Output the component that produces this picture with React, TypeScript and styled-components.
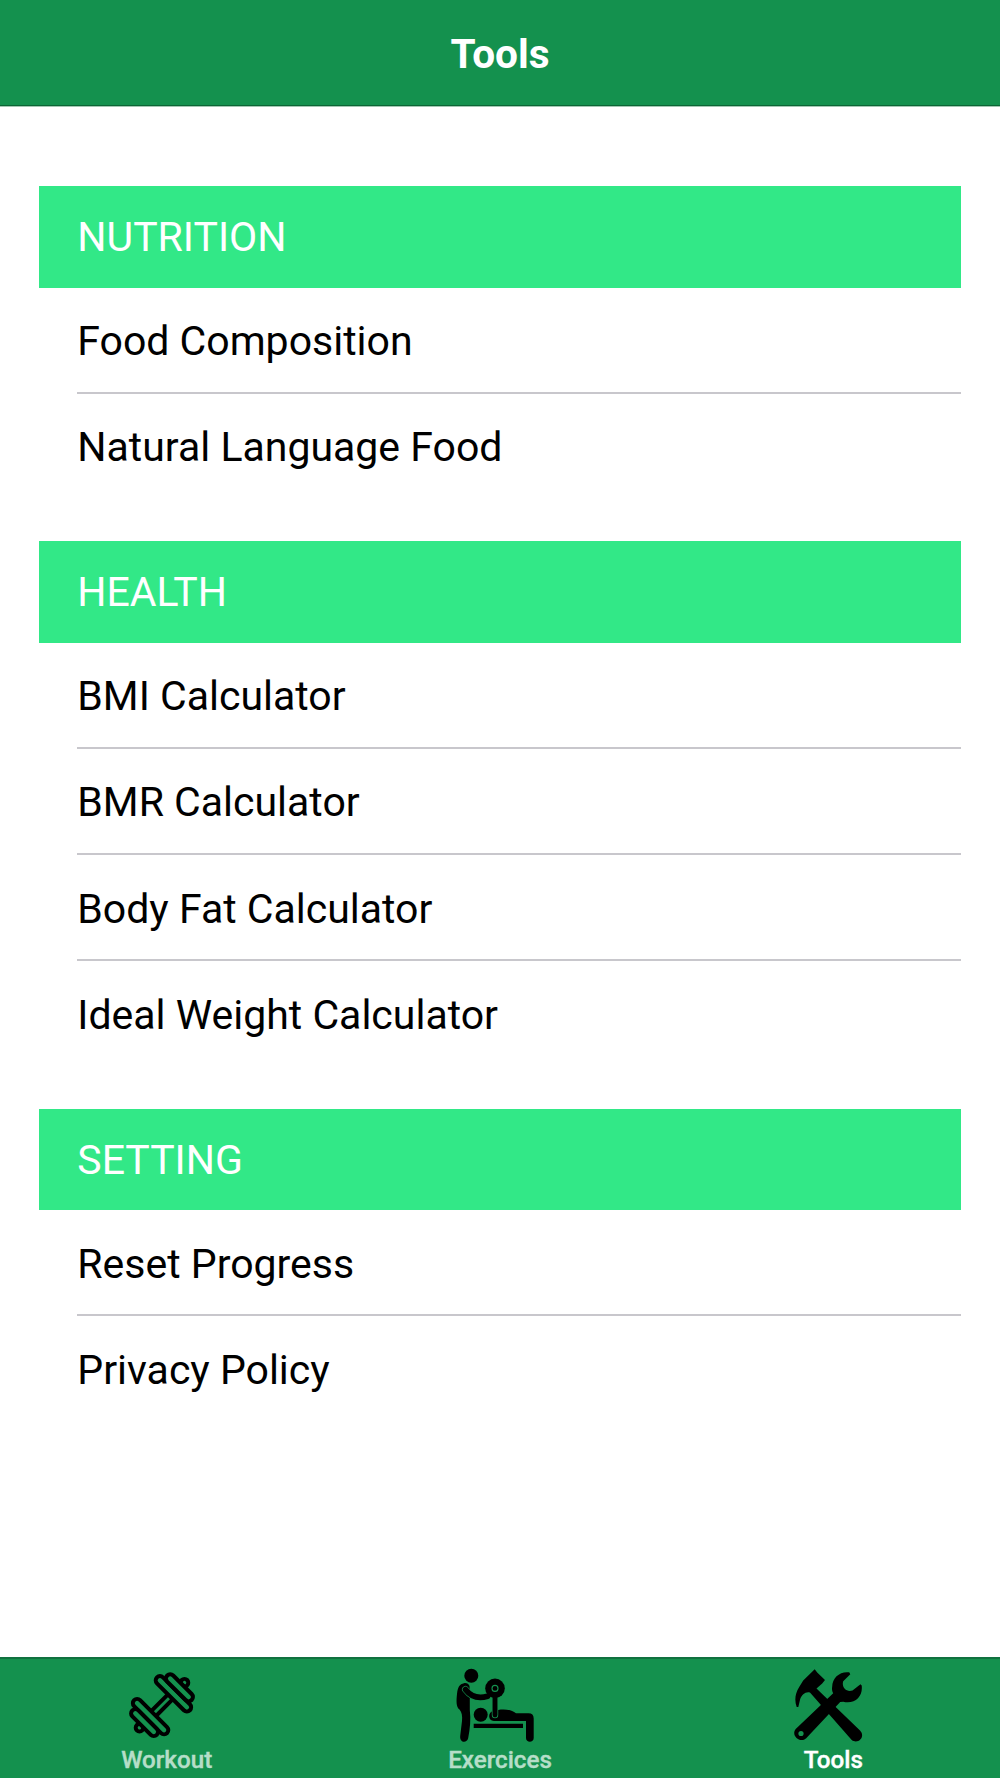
import React from "react";
import styled, { createGlobalStyle } from "styled-components";

const green = "#14914e";

const Global = createGlobalStyle`
  * { box-sizing: border-box; }
  body { margin: 0; background: #fff; font-family: Roboto, sans-serif; }
`;
const Screen = styled.div`
  width: 1000px;
  height: 1778px;
  display: flex;
  flex-direction: column;
  overflow: hidden;
`;
const Header = styled.header`
  height: 107px;
  flex: none;
  background: ${green};
  border-bottom: 1px solid #a3c9b3;
  box-shadow: inset 0 -1px 0 #0c6535;
  display: flex;
  align-items: center;
  justify-content: center;
  padding-top: 2px;
`;
const Title = styled.h1`
  margin: 0;
  font-size: 40.6px;
  line-height: 48px;
  font-weight: 700;
  color: #fff;
`;
const Content = styled.main`
  flex: 1;
  padding: 79px 39px 0;
  display: flex;
  flex-direction: column;
  gap: 41px;
`;
const Section = styled.section`
  display: flex;
  flex-direction: column;
`;
const Heading = styled.h2`
  margin: 0;
  height: 101.5px;
  padding: 1px 0 0 38.3px;
  display: flex;
  align-items: center;
  background: #32e887;
  color: #fff;
  font-size: 41px;
  font-weight: 400;
`;
const List = styled.ul`
  margin: 0;
  padding: 0 0 0 38.3px;
  list-style: none;
`;
const Row = styled.li`
  height: 106.25px;
  padding-top: 3px;
  display: flex;
  align-items: center;
  font-size: 41px;
  color: #000;
  border-bottom: 2px solid #c8c7cc;
  &:last-child { border-color: transparent; }
`;
const TabBar = styled.nav`
  height: 121px;
  flex: none;
  display: grid;
  grid-template-columns: repeat(3, 1fr);
  background: ${green};
  border-top: 2px solid #10713f;
`;
const Tab = styled.div<{ $active?: boolean }>`
  display: flex;
  flex-direction: column;
  align-items: center;
  padding-top: 1px;
  font-size: 24.2px;
  font-weight: 500;
  line-height: 28px;
  -webkit-text-stroke: 0.4px currentColor;
  color: ${p => (p.$active ? "#fff" : "#b6dec8")};
`;
const Icon = styled.svg`
  display: block;
  flex: none;
  height: 84px;
  margin: 0 8px 2px 0;
`;

function DumbbellIcon() {
  return (
    <Icon width="74" height="84" viewBox="125.7 1660 74 84" fill="none" stroke="#000" strokeWidth="4">
      <g transform="translate(161.7 1705.2) rotate(-45)">
        <path d="M-14 -3.4H14M-14 3.4H14" />
        <circle cx="-31.8" cy="0" r="3.8" />
        <circle cx="31.8" cy="0" r="3.8" />
        <rect x="-20.4" y="-23.3" width="8.5" height="46.6" rx="4.25" fill={green} />
        <rect x="-28.9" y="-17.3" width="8.5" height="34.6" rx="4.25" fill={green} />
        <rect x="11.9" y="-23.3" width="8.5" height="46.6" rx="4.25" fill={green} />
        <rect x="20.4" y="-17.3" width="8.5" height="34.6" rx="4.25" fill={green} />
      </g>
    </Icon>
  );
}

function BenchPressIcon() {
  return (
    <Icon width="84" height="84" viewBox="454 1660 84 84">
      <circle cx="471.3" cy="1675.8" r="7" />
      <path d="M464 1683.2C459.5 1684 457.8 1687 457 1694C456.3 1701 456 1707 459.5 1709.5C461.8 1712 462.5 1716 462 1721L460.2 1736C459.5 1743 467 1743.500 468.2 1738C470 1729 471 1719 469.8 1710V1692L469.5 1686C468.5 1684 467 1682.8 464 1683.2Z" />
      <path d="M465.5 1689.5C471.5 1697.5 479 1698.8 487.5 1696.3" fill="none" stroke={green} strokeWidth="7" strokeLinecap="round" />
      <path d="M465.5 1689.5C471.5 1697.5 479 1698.8 487.5 1696.3" fill="none" stroke="#000" strokeWidth="5.6" strokeLinecap="round" />
      <circle cx="480.7" cy="1714.7" r="7" />
      <path d="M493 1711C500 1709 509 1708 516 1713.2H528.5C532 1713.2 533.7 1715 533.7 1718.5V1738C533.7 1743 526 1743 526 1738V1721H494C488 1721 487.5 1712.5 493 1711Z" />
      <path d="M495 1696V1715" fill="none" stroke={green} strokeWidth="6.4" strokeLinecap="round" />
      <path d="M495 1696V1715" fill="none" stroke="#000" strokeWidth="4.9" strokeLinecap="round" />
      <path d="M473.7 1723.7H523V1728H473.7Z" />
      <circle cx="495" cy="1688.4" r="9.8" />
      <circle cx="495" cy="1688.4" r="3" fill="none" stroke={green} strokeWidth="1.1" />
    </Icon>
  );
}

function ToolsIcon() {
  return (
    <Icon width="74" height="84" viewBox="792.3 1660 74 84">
      <path d="M815 1669.3L817.5 1672.5L825.3 1680L822.5 1683.5L816.8 1688.5L860.3 1730.5C866.2 1736.5 858.5 1744.8 852 1740L810.5 1692.7C806 1691.2 802 1695 800.5 1699L798.6 1707H797C794.5 1700 795.5 1693.5 799.5 1687L803.5 1680.5Z" />
      <path d="M849.5 1672.3L850.6 1674.2L843.5 1681.2C841.7 1687.5 846.5 1692.5 852.8 1690.5L860.8 1684.2L862 1685.5C863.4 1696 855.5 1704.5 843.5 1701.7L840.5 1702L806.5 1738.2C800.5 1743.7 790.8 1735.5 796 1729L833.5 1693.3C832.5 1691.5 832 1689.5 832.5 1686.5C832.5 1677.5 840.5 1671 849.5 1672.3Z" />
      <circle cx="801.3" cy="1733.5" r="2.6" fill={green} />
    </Icon>
  );
}

const sections = [
  { title: "NUTRITION", rows: ["Food Composition", "Natural Language Food"] },
  { title: "HEALTH", rows: ["BMI Calculator", "BMR Calculator", "Body Fat Calculator", "Ideal Weight Calculator"] },
  { title: "SETTING", rows: ["Reset Progress", "Privacy Policy"] },
];

export default function App() {
  return (
    <Screen>
      <Global />
      <Header><Title>Tools</Title></Header>
      <Content>
        {sections.map(s => (
          <Section key={s.title}>
            <Heading>{s.title}</Heading>
            <List>{s.rows.map(r => <Row key={r}>{r}</Row>)}</List>
          </Section>
        ))}
      </Content>
      <TabBar>
        <Tab><DumbbellIcon />Workout</Tab>
        <Tab><BenchPressIcon />Exercices</Tab>
        <Tab $active><ToolsIcon />Tools</Tab>
      </TabBar>
    </Screen>
  );
}
